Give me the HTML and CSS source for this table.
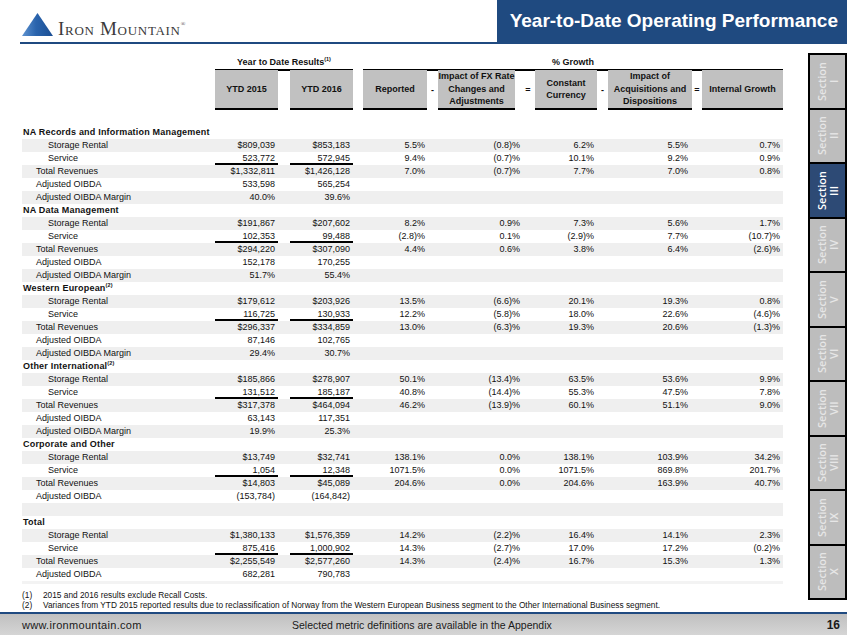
FILE: index.html
```html
<!DOCTYPE html>
<html>
<head>
<meta charset="utf-8">
<link rel="stylesheet" href="styles.css">
</head>
<body>
<div class="top">
  <div class="logo">
    <svg class="tri" width="31" height="23" viewBox="0 0 31 23">
      <defs>
        <linearGradient id="tg" x1="0" y1="0" x2="1" y2="0">
          <stop offset="0" stop-color="#5f93d0"/>
          <stop offset="0.45" stop-color="#2a64ad"/>
          <stop offset="1" stop-color="#1b4e93"/>
        </linearGradient>
      </defs>
      <polygon points="15.5,0 31,23 0,23" fill="url(#tg)"/>
    </svg>
    <span class="brand">Iron Mountain<sup>®</sup></span>
  </div>
  <div class="title">Year-to-Date Operating Performance</div>
</div>

<div class="content">
  <div class="main">
    <div class="g grp">
      <div class="gy">Year to Date Results<sup>(1)</sup></div>
      <div class="gg">% Growth</div>
    </div>
    <div class="g hb">
      <div class="bx x2">YTD 2015</div>
      <div class="bx x4">YTD 2016</div>
      <div class="bx x6">Reported</div>
      <div class="op x7">-</div>
      <div class="bx x8">Impact of FX Rate<br>Changes and<br>Adjustments</div>
      <div class="op x9 eq1">=</div>
      <div class="bx x10">Constant<br>Currency</div>
      <div class="op x11">-</div>
      <div class="bx x12">Impact of<br>Acquisitions and<br>Dispositions</div>
      <div class="op x13">=</div>
      <div class="bx x14">Internal Growth</div>
    </div>

    <div class="rows">
      <div class="g r"><span class="lb lh">NA Records and Information Management</span></div>
      <div class="g r s"><span class="lb li">Storage Rental</span><span class="n a">$809,039</span><span class="n b">$853,183</span><span class="n c">5.5%</span><span class="n d">(0.8)%</span><span class="n e">6.2%</span><span class="n f">5.5%</span><span class="n h">0.7%</span></div>
      <div class="g r u"><span class="lb li">Service</span><span class="n a">523,772</span><span class="n b">572,945</span><span class="n c">9.4%</span><span class="n d">(0.7)%</span><span class="n e">10.1%</span><span class="n f">9.2%</span><span class="n h">0.9%</span></div>
      <div class="g r s"><span class="lb lt">Total Revenues</span><span class="n a">$1,332,811</span><span class="n b">$1,426,128</span><span class="n c">7.0%</span><span class="n d">(0.7)%</span><span class="n e">7.7%</span><span class="n f">7.0%</span><span class="n h">0.8%</span></div>
      <div class="g r"><span class="lb lt">Adjusted OIBDA</span><span class="n a">533,598</span><span class="n b">565,254</span></div>
      <div class="g r s"><span class="lb lt">Adjusted OIBDA Margin</span><span class="n a">40.0%</span><span class="n b">39.6%</span></div>

      <div class="g r"><span class="lb lh">NA Data Management</span></div>
      <div class="g r s"><span class="lb li">Storage Rental</span><span class="n a">$191,867</span><span class="n b">$207,602</span><span class="n c">8.2%</span><span class="n d">0.9%</span><span class="n e">7.3%</span><span class="n f">5.6%</span><span class="n h">1.7%</span></div>
      <div class="g r u"><span class="lb li">Service</span><span class="n a">102,353</span><span class="n b">99,488</span><span class="n c">(2.8)%</span><span class="n d">0.1%</span><span class="n e">(2.9)%</span><span class="n f">7.7%</span><span class="n h">(10.7)%</span></div>
      <div class="g r s"><span class="lb lt">Total Revenues</span><span class="n a">$294,220</span><span class="n b">$307,090</span><span class="n c">4.4%</span><span class="n d">0.6%</span><span class="n e">3.8%</span><span class="n f">6.4%</span><span class="n h">(2.6)%</span></div>
      <div class="g r"><span class="lb lt">Adjusted OIBDA</span><span class="n a">152,178</span><span class="n b">170,255</span></div>
      <div class="g r s"><span class="lb lt">Adjusted OIBDA Margin</span><span class="n a">51.7%</span><span class="n b">55.4%</span></div>

      <div class="g r"><span class="lb lh">Western European<sup>(2)</sup></span></div>
      <div class="g r s"><span class="lb li">Storage Rental</span><span class="n a">$179,612</span><span class="n b">$203,926</span><span class="n c">13.5%</span><span class="n d">(6.6)%</span><span class="n e">20.1%</span><span class="n f">19.3%</span><span class="n h">0.8%</span></div>
      <div class="g r u"><span class="lb li">Service</span><span class="n a">116,725</span><span class="n b">130,933</span><span class="n c">12.2%</span><span class="n d">(5.8)%</span><span class="n e">18.0%</span><span class="n f">22.6%</span><span class="n h">(4.6)%</span></div>
      <div class="g r s"><span class="lb lt">Total Revenues</span><span class="n a">$296,337</span><span class="n b">$334,859</span><span class="n c">13.0%</span><span class="n d">(6.3)%</span><span class="n e">19.3%</span><span class="n f">20.6%</span><span class="n h">(1.3)%</span></div>
      <div class="g r"><span class="lb lt">Adjusted OIBDA</span><span class="n a">87,146</span><span class="n b">102,765</span></div>
      <div class="g r s"><span class="lb lt">Adjusted OIBDA Margin</span><span class="n a">29.4%</span><span class="n b">30.7%</span></div>

      <div class="g r"><span class="lb lh">Other International<sup>(2)</sup></span></div>
      <div class="g r s"><span class="lb li">Storage Rental</span><span class="n a">$185,866</span><span class="n b">$278,907</span><span class="n c">50.1%</span><span class="n d">(13.4)%</span><span class="n e">63.5%</span><span class="n f">53.6%</span><span class="n h">9.9%</span></div>
      <div class="g r u"><span class="lb li">Service</span><span class="n a">131,512</span><span class="n b">185,187</span><span class="n c">40.8%</span><span class="n d">(14.4)%</span><span class="n e">55.3%</span><span class="n f">47.5%</span><span class="n h">7.8%</span></div>
      <div class="g r s"><span class="lb lt">Total Revenues</span><span class="n a">$317,378</span><span class="n b">$464,094</span><span class="n c">46.2%</span><span class="n d">(13.9)%</span><span class="n e">60.1%</span><span class="n f">51.1%</span><span class="n h">9.0%</span></div>
      <div class="g r"><span class="lb lt">Adjusted OIBDA</span><span class="n a">63,143</span><span class="n b">117,351</span></div>
      <div class="g r s"><span class="lb lt">Adjusted OIBDA Margin</span><span class="n a">19.9%</span><span class="n b">25.3%</span></div>

      <div class="g r"><span class="lb lh">Corporate and Other</span></div>
      <div class="g r s"><span class="lb li">Storage Rental</span><span class="n a">$13,749</span><span class="n b">$32,741</span><span class="n c">138.1%</span><span class="n d">0.0%</span><span class="n e">138.1%</span><span class="n f">103.9%</span><span class="n h">34.2%</span></div>
      <div class="g r u"><span class="lb li">Service</span><span class="n a">1,054</span><span class="n b">12,348</span><span class="n c">1071.5%</span><span class="n d">0.0%</span><span class="n e">1071.5%</span><span class="n f">869.8%</span><span class="n h">201.7%</span></div>
      <div class="g r s"><span class="lb lt">Total Revenues</span><span class="n a">$14,803</span><span class="n b">$45,089</span><span class="n c">204.6%</span><span class="n d">0.0%</span><span class="n e">204.6%</span><span class="n f">163.9%</span><span class="n h">40.7%</span></div>
      <div class="g r"><span class="lb lt">Adjusted OIBDA</span><span class="n a">(153,784)</span><span class="n b">(164,842)</span></div>
      <div class="g r s"></div>

      <div class="g r"><span class="lb lh">Total</span></div>
      <div class="g r s"><span class="lb li">Storage Rental</span><span class="n a">$1,380,133</span><span class="n b">$1,576,359</span><span class="n c">14.2%</span><span class="n d">(2.2)%</span><span class="n e">16.4%</span><span class="n f">14.1%</span><span class="n h">2.3%</span></div>
      <div class="g r u"><span class="lb li">Service</span><span class="n a">875,416</span><span class="n b">1,000,902</span><span class="n c">14.3%</span><span class="n d">(2.7)%</span><span class="n e">17.0%</span><span class="n f">17.2%</span><span class="n h">(0.2)%</span></div>
      <div class="g r s"><span class="lb lt">Total Revenues</span><span class="n a">$2,255,549</span><span class="n b">$2,577,260</span><span class="n c">14.3%</span><span class="n d">(2.4)%</span><span class="n e">16.7%</span><span class="n f">15.3%</span><span class="n h">1.3%</span></div>
      <div class="g r"><span class="lb lt">Adjusted OIBDA</span><span class="n a">682,281</span><span class="n b">790,783</span></div>
      <div class="g strip"></div>
    </div>

    <div class="fn">
      <p><b>(1)</b><span>2015 and 2016 results exclude Recall Costs.</span></p>
      <p><b>(2)</b><span>Variances from YTD 2015 reported results due to reclassification of Norway from the Western European Business segment to the Other International Business segment.</span></p>
    </div>
  </div>

  <div class="side">
    <div class="tab"><span>Section<br>I</span></div>
    <div class="tab"><span>Section<br>II</span></div>
    <div class="tab on"><span>Section<br>III</span></div>
    <div class="tab"><span>Section<br>IV</span></div>
    <div class="tab"><span>Section<br>V</span></div>
    <div class="tab"><span>Section<br>VI</span></div>
    <div class="tab"><span>Section<br>VII</span></div>
    <div class="tab"><span>Section<br>VIII</span></div>
    <div class="tab"><span>Section<br>IX</span></div>
    <div class="tab"><span>Section<br>X</span></div>
  </div>
</div>

<div class="foot">
  <span class="fw">www.ironmountain.com</span>
  <span class="fc">Selected metric definitions are available in the Appendix</span>
  <span class="fp">16</span>
</div>
</body>
</html>
```

FILE: styles.css
```css
html, body {
  margin: 0;
  padding: 0;
}
body {
  width: 847px;
  height: 635px;
  overflow: hidden;
  background: #fff;
  color: #111;
  font-family: "Liberation Sans", Arial, sans-serif;
  display: flex;
  flex-direction: column;
}

/* header */
.top {
  display: flex;
  height: 42px;
  margin-left: 20px;
  border-bottom: 2px solid #1f4a80;
}
.logo {
  flex: 1;
  display: flex;
  align-items: flex-start;
  padding-left: 2px;
}
.tri {
  margin-top: 13px;
  flex: none;
}
.brand {
  margin-top: 19px;
  margin-left: 5px;
  font-family: "Liberation Serif", "Times New Roman", serif;
  font-variant: small-caps;
  font-size: 19px;
  line-height: 19px;
  letter-spacing: 0.7px;
  color: #3a3a3a;
}
.brand sup {
  font-size: 6px;
  vertical-align: 9px;
  line-height: 0;
  letter-spacing: 0;
}
.title {
  width: 341px;
  padding-right: 9px;
  background: #1f4a80;
  color: #fff;
  font-weight: bold;
  font-size: 19px;
  line-height: 42px;
  text-align: right;
  white-space: nowrap;
}

/* content */
.content {
  flex: 1;
  display: flex;
}
.main {
  width: 808px;
  padding-top: 11px;
}

.g {
  display: grid;
  grid-template-columns: 193px 63px 12px 63px 10px 64px 11px 77px 20px 62px 11px 84px 10px 81px;
  width: 761px;
  margin-left: 22px;
}

.grp {
  height: 14px;
  font-size: 9px;
  font-weight: bold;
  line-height: 14px;
}
.gy, .gg {
  text-align: center;
  border-bottom: 2px solid #000;
}
.gy { grid-column: 2 / 5; }
.gg { grid-column: 6 / 15; }
.grp sup {
  font-size: 5.5px;
  vertical-align: 4px;
  line-height: 0;
}

.hb {
  margin-top: 1px;
  height: 40px;
  font-size: 9px;
  font-weight: bold;
  line-height: 12.5px;
}
.bx {
  background: #c1c1c1;
  border-bottom: 2px solid #000;
  display: flex;
  align-items: center;
  justify-content: center;
  text-align: center;
  white-space: nowrap;
}
.op {
  display: flex;
  align-items: center;
  justify-content: center;
}
.eq1 { padding-left: 6px; }
.x2 { grid-column: 2; }
.x4 { grid-column: 4; }
.x6 { grid-column: 6; }
.x7 { grid-column: 7; }
.x8 { grid-column: 8; }
.x9 { grid-column: 9; }
.x10 { grid-column: 10; }
.x11 { grid-column: 11; }
.x12 { grid-column: 12; }
.x13 { grid-column: 13; }
.x14 { grid-column: 14; }

/* data rows */
.rows {
  margin-top: 16px;
}
.r {
  height: 13px;
  font-size: 9px;
  line-height: 13px;
}
.r span {
  white-space: nowrap;
}
.s {
  background: #efefef;
}
.strip {
  height: 3px;
  background: #f3f3f3;
}
.lb { grid-column: 1; }
.lh {
  font-weight: bold;
  padding-left: 1px;
  letter-spacing: 0.2px;
}
.lh sup {
  font-size: 5.5px;
  vertical-align: 4px;
  line-height: 0;
}
.li { padding-left: 26px; }
.lt { padding-left: 14px; }
.n { text-align: right; }
.a { grid-column: 2; padding-right: 3px; }
.b { grid-column: 4; padding-right: 3px; }
.c { grid-column: 6; padding-right: 2px; }
.d { grid-column: 8 / 10; padding-right: 15px; }
.e { grid-column: 10; padding-right: 3px; }
.f { grid-column: 12; padding-right: 4px; }
.h { grid-column: 14; padding-right: 3px; }
.u .a, .u .b {
  box-shadow: inset 0 -2px 0 #000;
}

/* footnotes */
.fn {
  margin-top: 6px;
  margin-left: 22px;
  font-size: 8.3px;
  line-height: 10px;
}
.fn p {
  margin: 0;
  display: flex;
  white-space: nowrap;
}
.fn b {
  width: 21px;
  font-weight: normal;
  flex: none;
}

/* sidebar */
.side {
  width: 35px;
  margin-top: 9px;
  height: 543px;
  background: #000;
  padding: 2px;
  display: flex;
  flex-direction: column;
  gap: 2px;
}
.tab {
  flex: 1;
  background: #bdbdbd;
  color: #e6e6e6;
  display: flex;
  align-items: center;
  justify-content: center;
  font-family: "Open Sans", "DejaVu Sans", sans-serif;
  font-weight: 600;
  font-size: 11px;
}
.tab span {
  writing-mode: vertical-rl;
  transform: rotate(180deg);
  line-height: 12px;
  text-align: center;
}
.tab.on {
  background: #2d4a75;
  color: #fff;
}

/* footer */
.foot {
  height: 21px;
  border-top: 2px solid #1f4a80;
  background: linear-gradient(#c0c0c0, #d5d5d5);
  display: flex;
  align-items: center;
  padding-left: 22px;
  padding-right: 7px;
  color: #1a1a1a;
}
.fw {
  width: 270px;
  font-size: 11px;
  letter-spacing: 0.3px;
}
.fc {
  font-size: 10.5px;
}
.fp {
  margin-left: auto;
  font-weight: bold;
  font-size: 12px;
}
```
